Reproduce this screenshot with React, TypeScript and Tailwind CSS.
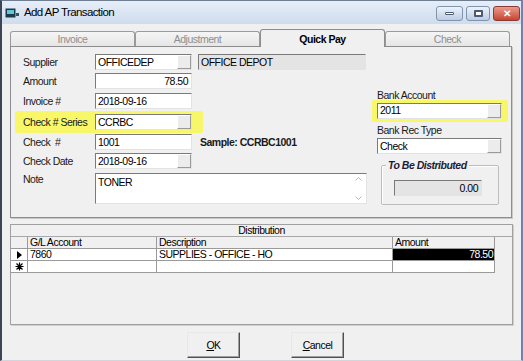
import React from "react";

const sunken =
  "border border-t-[#7a7a7a] border-l-[#7a7a7a] border-b-[#e3e3e3] border-r-[#e3e3e3]";
const txt = "text-[10.5px] tracking-[-0.5px] leading-none";

function DropBtn() {
  return (
    <div className="ml-auto h-[14px] w-[14px] shrink-0 border border-t-white border-l-white border-b-[#9a9a9a] border-r-[#9a9a9a] bg-[#ececec]" />
  );
}

function Field({
  w,
  children,
  right,
  drop,
  gray,
}: {
  w: string;
  children?: React.ReactNode;
  right?: boolean;
  drop?: boolean;
  gray?: boolean;
}) {
  return (
    <div
      className={`${w} h-[16px] ${sunken} ${gray ? "bg-[#e4e4e4]" : "bg-white"} flex items-center pl-[2px] pr-0 ${txt} text-black ${right ? "justify-end pr-[3px]" : ""}`}
    >
      <span className={right ? "" : "flex-1"}>{children}</span>
      {drop && <DropBtn />}
    </div>
  );
}

function Label({ children }: { children: React.ReactNode }) {
  return <div className={`w-[72px] shrink-0 whitespace-nowrap ${txt} text-[#1a1a1a]`}>{children}</div>;
}

function Tab({ label, active }: { label: string; active?: boolean }) {
  return active ? (
    <div className={`relative z-10 -mb-px flex h-[18px] w-[125px] items-start justify-center rounded-t-[3px] border border-b-0 border-[#8d8d8d] bg-[#f0f0f0] pt-[4px] ${txt} font-bold text-black`}>
      {label}
    </div>
  ) : (
    <div className={`flex h-[15px] w-[125px] items-center justify-center rounded-t-[3px] border border-b-0 border-[#9a9a9a] bg-gradient-to-b from-[#f5f5f5] to-[#e6e6e6] ${txt} text-[#8f8f8f]`}>
      {label}
    </div>
  );
}

function Cell({ w, children, cls = "" }: { w: string; children?: React.ReactNode; cls?: string }) {
  return <div className={`flex ${w} items-center border-b border-r border-[#9a9a9a] ${cls}`}>{children}</div>;
}

export default function App() {
  return (
    <div className="relative h-[361px] w-[523px] overflow-hidden bg-[#f0f0f0] font-['Liberation_Sans',Arial,sans-serif]">
      <div className="flex h-full w-full flex-col border-l-2 border-r-2 border-t border-b border-l-[#3c4656] border-r-[#4b8fd0] border-t-[#6e7d90] border-b-[#d4d4dc]">
        {/* title bar */}
        <div className="flex h-[23px] shrink-0 items-center bg-gradient-to-b from-[#e6eef8] to-[#d0dcec] pl-[3px]">
          <svg width="15" height="12" viewBox="0 0 15 12" className="mr-[4px]">
            <rect x="0.5" y="1.5" width="10" height="9" fill="#1d3b4a" />
            <rect x="2" y="3" width="7" height="4" fill="#5fc7d6" />
            <rect x="11" y="6" width="3" height="3" fill="#2c5566" />
          </svg>
          <span className="text-[11.5px] tracking-[-0.6px] text-black">Add AP Transaction</span>
          <div className="ml-auto mr-[1px] flex items-center gap-[3px] self-start pt-[5px]">
            <div className="flex h-[15px] w-[27px] items-center justify-center rounded-[3px] border border-[#8094b0] bg-gradient-to-b from-[#eef3fa] to-[#bccde3]">
              <div className="h-[3px] w-[9px] rounded-[1px] border border-[#4a5a70] bg-white" />
            </div>
            <div className="flex h-[15px] w-[24px] items-center justify-center rounded-[3px] border border-[#8094b0] bg-gradient-to-b from-[#eef3fa] to-[#bccde3]">
              <div className="h-[7px] w-[9px] rounded-[1px] border-2 border-[#4a5a70] bg-white" />
            </div>
            <div className="flex h-[15px] w-[27px] items-center justify-center rounded-[3px] border border-[#8a3a30] bg-gradient-to-b from-[#e99a8c] to-[#c7432f] text-[10px] font-bold leading-none text-white">
              ✕
            </div>
          </div>
        </div>

        {/* body */}
        <div className="flex flex-1 flex-col pl-[8px] pr-[9px]">
          <div className="mt-[5px] flex items-end">
            <Tab label="Invoice" />
            <Tab label="Adjustment" />
            <Tab label="Quick Pay" active />
            <Tab label="Check" />
          </div>

          <div className="flex h-[172px] w-[502px] border border-[#8d8d8d] bg-[#f0f0f0] shadow-[1px_1px_0_#c8c8c8]">
            <div className="flex w-[361px] flex-col pt-[7px]">
              <div className="flex items-center pl-[12px]">
                <Label>Supplier</Label>
                <Field w="w-[97px]" drop>OFFICEDEP</Field>
                <div className="ml-[6px]">
                  <Field w="w-[168px]" gray>OFFICE DEPOT</Field>
                </div>
              </div>
              <div className="mt-[3px] flex items-center pl-[12px]">
                <Label>Amount</Label>
                <Field w="w-[97px]" right>78.50</Field>
              </div>
              <div className="mt-[4px] flex items-center pl-[12px]">
                <Label>Invoice #</Label>
                <Field w="w-[97px]">2018-09-16</Field>
              </div>
              <div className="ml-[4px] mt-[2px] flex w-[188px] items-center rounded-[2px] bg-[#f8f76a] py-[3px] pl-[8px]">
                <Label>Check # Series</Label>
                <Field w="w-[97px]" drop>CCRBC</Field>
              </div>
              <div className="mt-[1px] flex items-center pl-[12px]">
                <Label>Check &nbsp;#</Label>
                <Field w="w-[97px]">1001</Field>
                <span className={`ml-[8px] ${txt} font-bold text-[#1a1a1a]`}>Sample: CCRBC1001</span>
              </div>
              <div className="mt-[3px] flex items-center pl-[12px]">
                <Label>Check Date</Label>
                <Field w="w-[97px]" drop>2018-09-16</Field>
              </div>
              <div className="mt-[4px] flex items-start pl-[12px]">
                <div className="pt-[1px]">
                  <Label>Note</Label>
                </div>
                <div className={`flex h-[31px] w-[272px] ${sunken} bg-white`}>
                  <span className={`flex-1 pl-[2px] pt-[3px] ${txt} text-black`}>TONER</span>
                  <div className="flex w-[15px] flex-col items-center justify-between py-[3px]">
                    <svg width="7" height="4" viewBox="0 0 7 4"><path d="M0.5 3.5 L3.5 0.5 L6.5 3.5" fill="none" stroke="#b8b8b8" /></svg>
                    <svg width="7" height="4" viewBox="0 0 7 4"><path d="M0.5 0.5 L3.5 3.5 L6.5 0.5" fill="none" stroke="#b8b8b8" /></svg>
                  </div>
                </div>
              </div>
            </div>

            <div className="flex flex-col pt-[43px]">
              <div className={`pl-[5px] ${txt} text-[#1a1a1a]`}>Bank Account</div>
              <div className="mt-[-1px] flex w-[136px] rounded-[2px] bg-[#f8f76a] py-[3px] pl-[5px]">
                <Field w="w-[125px]" drop>2011</Field>
              </div>
              <div className={`mt-[3px] pl-[5px] ${txt} text-[#1a1a1a]`}>Bank Rec Type</div>
              <div className="mt-[3px] pl-[5px]">
                <Field w="w-[125px]" drop>Check</Field>
              </div>
              <div className="relative ml-[9px] mt-[11px] h-[40px] w-[118px] rounded-[2px] border border-[#bdbdbd] shadow-[inset_1px_1px_0_#fff]">
                <span className={`absolute left-[4px] top-[-6px] bg-[#f0f0f0] px-[2px] ${txt} font-bold italic text-[#1c1c3a]`}>
                  To Be Distributed
                </span>
                <div className="ml-[12px] mt-[14px]">
                  <Field w="w-[88px]" gray right>0.00</Field>
                </div>
              </div>
            </div>
          </div>

          <div className="mt-[6px] flex h-[101px] w-[503px] flex-col border border-[#a0a0a0] shadow-[1px_1px_0_#cfcfcf]">
            <div className={`flex h-[12px] items-center justify-center border-b border-[#a8a8a8] ${txt} text-black`}>
              Distribution
            </div>
            <div className={`flex flex-1 flex-col ${txt} text-black`}>
              <div className="flex h-[12px]">
                <Cell w="w-[17px]" />
                <Cell w="w-[129px]" cls="pl-[2px]">G/L Account</Cell>
                <Cell w="w-[236px]" cls="pl-[2px]">Description</Cell>
                <Cell w="w-[102px]" cls="pl-[2px]">Amount</Cell>
              </div>
              <div className="flex h-[12px]">
                <Cell w="w-[17px]" cls="justify-center bg-white">
                  <svg width="5" height="8" viewBox="0 0 5 8"><path d="M0 0 L5 4 L0 8 Z" fill="#000" /></svg>
                </Cell>
                <Cell w="w-[129px]" cls="bg-white pl-[2px]">7860</Cell>
                <Cell w="w-[236px]" cls="bg-white pl-[2px]">SUPPLIES - OFFICE - HO</Cell>
                <Cell w="w-[102px]" cls="justify-end bg-black pr-[1px] text-white">78.50</Cell>
              </div>
              <div className="flex h-[12px]">
                <Cell w="w-[17px]" cls="justify-center bg-white">
                  <svg width="9" height="9" viewBox="0 0 9 9" stroke="#000" strokeWidth="1.2"><path d="M4.5 0.5 V8.5 M0.5 4.5 H8.5 M1.5 1.5 L7.5 7.5 M7.5 1.5 L1.5 7.5" /></svg>
                </Cell>
                <Cell w="w-[129px]" cls="bg-white" />
                <Cell w="w-[236px]" cls="bg-white" />
                <Cell w="w-[102px]" cls="bg-white" />
              </div>
            </div>
          </div>

          <div className="mt-[7px] flex pl-[177px]">
            <div className={`flex h-[26px] w-[53px] items-center justify-center border border-t-[#e8e8e8] border-l-[#e8e8e8] border-b-[#505050] border-r-[#505050] bg-[#f0f0f0] ${txt} text-black shadow-[inset_-1px_-1px_0_#a0a0a0]`}>
              <span><u>O</u>K</span>
            </div>
            <div className={`ml-[51px] flex h-[26px] w-[53px] items-center justify-center border border-t-[#e8e8e8] border-l-[#e8e8e8] border-b-[#505050] border-r-[#505050] bg-[#f0f0f0] ${txt} text-black shadow-[inset_-1px_-1px_0_#a0a0a0]`}>
              <span><u>C</u>ancel</span>
            </div>
          </div>
        </div>
      </div>
    </div>
  );
}
